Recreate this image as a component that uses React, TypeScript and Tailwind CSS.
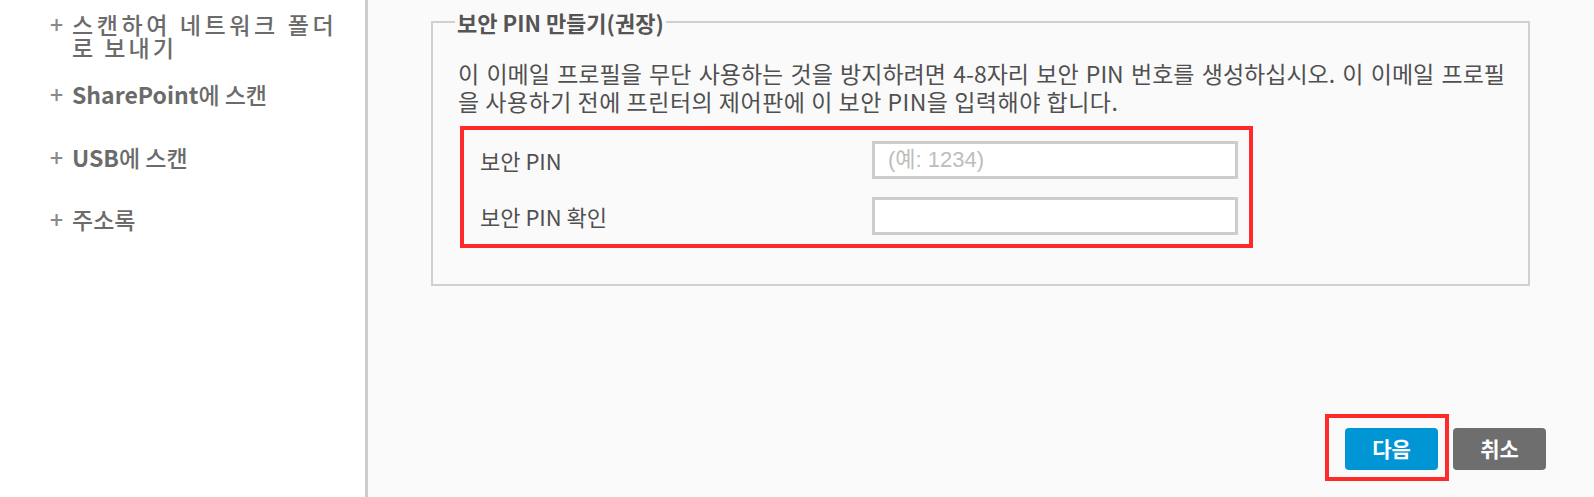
import React from "react";

const KR = "font-['Noto_Sans_CJK_KR','Noto_Sans',sans-serif]";

function NavItem({ children, className = "" }: { children: React.ReactNode; className?: string }) {
  return (
    <div className={`flex text-[23px] leading-[23px] ${className}`}>
      <span className="w-[22px] shrink-0 text-[#8a8a8a] font-medium">+</span>
      <div className="text-[#6b6b6b] font-medium whitespace-nowrap">{children}</div>
    </div>
  );
}

export default function App() {
  return (
    <div className={`flex w-[1594px] h-[497px] overflow-hidden ${KR}`}>
      <aside className="w-[368px] shrink-0 bg-white border-r-[3px] border-[#cccccc] pl-[50px] pt-[13px]">
        <NavItem>
          <div className="tracking-[3.6px]">스캔하여 네트워크 폴더</div>
          <div className="tracking-[3px]">로 보내기</div>
        </NavItem>
        <NavItem className="mt-[24px]">
          <span className="font-bold">SharePoint</span>에 스캔
        </NavItem>
        <NavItem className="mt-[40px]">
          <span className="font-bold">USB</span>에 스캔
        </NavItem>
        <NavItem className="mt-[39px]">주소록</NavItem>
      </aside>

      <main className="flex-1 bg-[#fafafa] flex flex-col">
        <fieldset className="ml-[63px] mr-[64px] mt-[8px] border-2 border-[#d0d0d0] pl-[25px] pr-[8px] pb-[36px]">
          <legend className="-ml-[3px] px-[2px] text-[22px] leading-[28px] font-bold text-[#555555]">
            보안 PIN 만들기(권장)
          </legend>
          <div className="mt-[23px] text-[23px] leading-[28px] text-[#505050]">
            <div className="w-[1047px] whitespace-nowrap text-justify [text-align-last:justify]">
              이 이메일 프로필을 무단 사용하는 것을 방지하려면 4-8자리 보안 PIN 번호를 생성하십시오. 이 이메일 프로필
            </div>
            <div className="whitespace-nowrap tracking-[0.5px]">
              을 사용하기 전에 프린터의 제어판에 이 보안 PIN을 입력해야 합니다.
            </div>
          </div>
          <div className="mt-[11px] ml-[2px] w-[793px] h-[122px] border-4 border-[#ff2b2b] pl-[16px] pt-[11px] flex flex-col gap-[18px]">
            <div className="flex items-center h-[38px]">
              <label className="w-[392px] text-[22px] text-[#505050]">보안 PIN</label>
              <input
                type="text"
                placeholder="(예: 1234)"
                className="w-[366px] h-[38px] border-[3px] border-[#cdcdcd] bg-white pl-[13px] text-[22px] font-['Liberation_Sans','Noto_Sans_CJK_KR',sans-serif] placeholder:text-[#bdbdbd] outline-none"
              />
            </div>
            <div className="flex items-center h-[38px]">
              <label className="w-[392px] text-[22px] text-[#505050]">보안 PIN 확인</label>
              <input
                type="password"
                className="w-[366px] h-[38px] border-[3px] border-[#cdcdcd] bg-white pl-[13px] text-[22px] outline-none"
              />
            </div>
          </div>
        </fieldset>

        <div className="mt-[128px] flex justify-end items-start pr-[48px]">
          <div className="border-4 border-[#ff2b2b] pl-[16px] pr-[7px] pt-[10px] pb-[7px]">
            <button className="w-[93px] h-[42px] rounded-[4px] bg-[#0096d6] text-white text-[21px] font-bold">
              다음
            </button>
          </div>
          <button className="ml-[4px] mt-[14px] w-[93px] h-[42px] rounded-[4px] bg-[#6e6e6e] text-white text-[21px] font-bold">
            취소
          </button>
        </div>
      </main>
    </div>
  );
}
